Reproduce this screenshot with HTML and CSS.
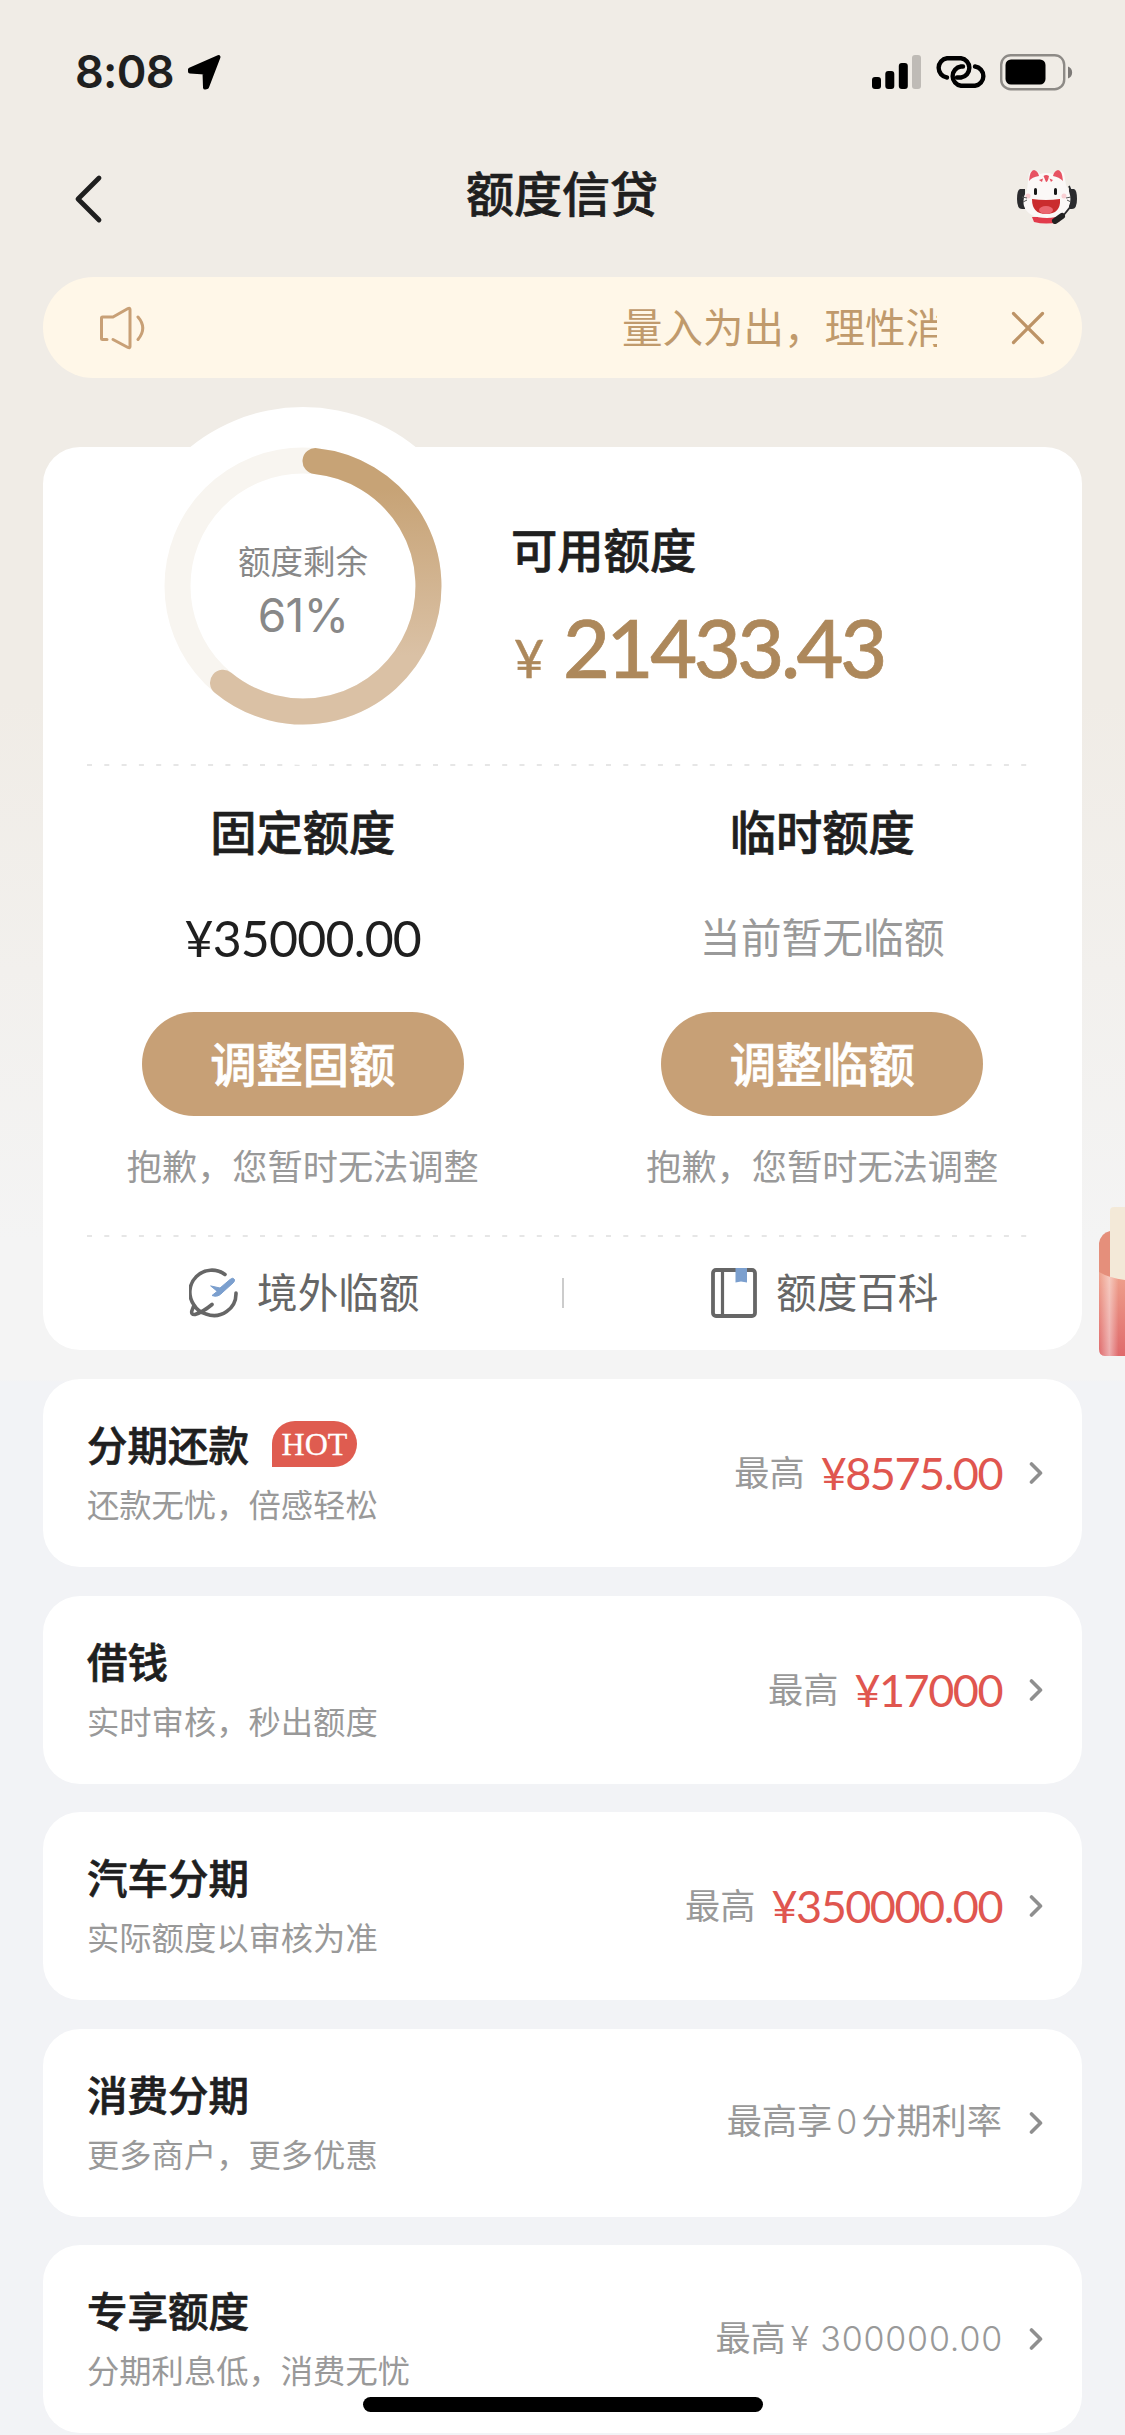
FILE: index.html
```html
<!DOCTYPE html>
<html lang="zh-CN">
<head>
<meta charset="utf-8">
<title>额度信贷</title>
<link rel="stylesheet" href="styles.css">
</head>
<body>
<div class="screen">
  <div class="status">
    <span class="clock">8:08</span>
    <svg class="locate" width="36" height="36" viewBox="0 0 36 36"><path d="M3 15.500L31.500 3L20 33L18 33.500L17.500 18.500L3 17.500Z" stroke="#000" stroke-width="4" stroke-linejoin="round"/></svg>
    <div class="indicators">
      <svg width="50" height="36" viewBox="0 0 50 36"><rect x="0" y="23" width="9" height="12" rx="3"/><rect x="13.300" y="17" width="9" height="18" rx="3"/><rect x="26.800" y="9" width="9" height="26" rx="3"/><rect x="40" y="1" width="9" height="34" rx="3" fill="#bfbbb6"/></svg>
      <svg width="52" height="32" viewBox="0 0 52 32" fill="none" stroke="#000" stroke-width="4.400" stroke-linecap="round"><path d="M12 21.500A9.750 9.750 0 0 1 12 2.200H26A9.750 9.750 0 0 1 26 21.500H22"/><path d="M40 10.500A9.750 9.750 0 0 1 40 29.800H26A9.750 9.750 0 0 1 26 10.500H28"/></svg>
      <svg width="74" height="37" viewBox="0 0 74 37"><rect x="1.200" y="1.200" width="63" height="34" rx="9.500" fill="none" stroke="#8d8a86" stroke-width="2.400"/><rect x="5.500" y="5.500" width="40" height="25" rx="5.500"/><path d="M68 12.500C73.500 14 73.500 23 68 24.500Z" fill="#7d7a77"/></svg>
    </div>
  </div>

  <header class="nav">
    <svg class="back" width="32" height="52" viewBox="0 0 32 52" fill="none" stroke="#1f1f1f" stroke-width="4.800" stroke-linecap="round" stroke-linejoin="round"><path d="M27 5L6 26L27 47"/></svg>
    <h1>额度信贷</h1>
    <svg class="mascot" width="62" height="56" viewBox="0 0 62 56">
      <path d="M9 21H4Q1 22 1 31Q1 41 6 41H9ZM53 21H58Q61 22 61 31Q61 41 56 41H53Z" fill="#2b2b2e"/>
      <path d="M16 49H46L43 54Q30 57 18 54Z" fill="#e23b4c"/>
      <path d="M11 22L13 5Q18 -1 24 6Q31 4 37 6Q43 -1 48 5L50 17Q57 29 53 38Q48 50 31 50Q12 50 8 38Q6 30 11 22Z" fill="#fbf8f7"/>
      <path d="M13 13Q14 2 18 2Q22 3 23 8Q16 9 13 13ZM47 13Q46 2 42 2Q38 3 37 8Q43 9 47 13ZM27.500 8L30 14Q32 14 33 8Q30 6 27.500 8ZM23 12L27 10.500L26 14ZM37 12L33.500 10.500L35 14Z" fill="#e75262"/>
      <rect x="18" y="20" width="3" height="7" rx="1.500" fill="#171717"/><rect x="38" y="20" width="3" height="7" rx="1.500" fill="#171717"/>
      <path d="M16 31Q30 33 44 31Q45 46 30 46Q16 46 16 31Z" fill="#ca2c2e"/><ellipse cx="30" cy="42" rx="7" ry="4" fill="#ea6670"/>
      <circle cx="12" cy="28" r="2.500" fill="#f9cfd3"/><circle cx="48" cy="28" r="2.500" fill="#f9cfd3"/>
      <path d="M6 29L11 30M7 34L11 32M50 30L55 29M51 32L55 34" stroke="#555" stroke-width="1"/>
      <path d="M53 18Q58 28 55 38L47 48" fill="none" stroke="#2b2b2e" stroke-width="1.800"/><path d="M39 53L46 48" stroke="#222" stroke-width="6" stroke-linecap="round"/>
    </svg>
  </header>

  <div class="notice">
    <svg width="48" height="46" viewBox="0 0 48 46" fill="none" stroke="#c8a076" stroke-width="3" stroke-linecap="round" stroke-linejoin="round"><path d="M8 34.500H3.500Q2.500 34.500 2.500 33.500V13Q2.500 12 3.500 12H14L29 3.500Q31 2.500 31 4.500V41.500Q31 43.500 29 42.500L14 34.500"/><path d="M39 12Q48.500 23 39 34.500"/></svg>
    <div class="ticker">量入为出，理性消费</div>
    <svg width="34" height="34" viewBox="0 0 34 34" stroke="#bd9366" stroke-width="3.200" stroke-linecap="round"><path d="M2.500 2.500L31.500 31.500M31.500 2.500L2.500 31.500"/></svg>
  </div>

  <main class="card quota">
    <section class="summary">
      <div class="gauge">
        <svg width="358" height="358" viewBox="0 0 358 358">
          <defs><linearGradient id="gold" gradientUnits="userSpaceOnUse" x1="0" y1="40" x2="0" y2="318"><stop offset="0.150" stop-color="#c7a376"/><stop offset="0.750" stop-color="#dac1a5"/></linearGradient></defs>
          <circle cx="179" cy="179" r="179" fill="#fff"/>
          <circle cx="179" cy="179" r="125.500" fill="none" stroke="#f8f5f0" stroke-width="26"/>
          <path d="M191.500 54.100A125.500 125.500 0 1 1 99 275.700" fill="none" stroke="url(#gold)" stroke-width="26" stroke-linecap="round"/>
        </svg>
        <div class="gauge-label"><span>额度剩余</span><b>61%</b></div>
      </div>
      <div class="available">
        <h2>可用额度</h2>
        <p><span class="yen">¥</span><span class="num">21433.43</span></p>
      </div>
    </section>
    <svg class="dash" width="944" height="2" viewBox="0 0 944 2"><path d="M0 1H944" stroke="#e6e6e6" stroke-width="2" stroke-dasharray="5 12.300"/></svg>
    <section class="columns">
      <div class="column">
        <h2>固定额度</h2>
        <p class="amount">¥35000.00</p>
        <button>调整固额</button>
        <small>抱歉，您暂时无法调整</small>
      </div>
      <div class="column">
        <h2>临时额度</h2>
        <p class="none">当前暂无临额</p>
        <button>调整临额</button>
        <small>抱歉，您暂时无法调整</small>
      </div>
    </section>
    <svg class="dash" width="944" height="2" viewBox="0 0 944 2"><path d="M0 1H944" stroke="#e6e6e6" stroke-width="2" stroke-dasharray="5 12.300"/></svg>
    <nav class="links">
      <a><svg width="50" height="50" viewBox="0 0 50 50" fill="none" stroke="#666" stroke-width="3.600" stroke-linecap="round" stroke-linejoin="round"><path d="M36 6.500A22 22 0 0 0 5 37L2.800 43Q2 47 6 46.500Q14 44 23 36.500M5 37Q9 44 17 46A22 22 0 0 0 47 25"/><path d="M22 18L31 20L41 11.500Q44 9 45.500 11.500Q46 13 44 15L34 24Q29 30 23 27.500L28 23.500Z" fill="#7b9fce" stroke="#7b9fce" stroke-width="1"/></svg><span>境外临额</span></a>
      <i></i>
      <a><svg width="47" height="50" viewBox="0 0 47 50"><rect x="2" y="2" width="42" height="46" rx="3" fill="none" stroke="#666" stroke-width="3.800"/><path d="M11.500 2V48" stroke="#666" stroke-width="3.200"/><path d="M24.500 0H36V14.500L30 13.500L24.500 14.500Z" fill="#7b9fce"/></svg><span>额度百科</span></a>
    </nav>
  </main>

  <div class="list">
    <article class="card row">
      <div><h3>分期还款<em>HOT</em></h3><p>还款无忧，倍感轻松</p></div>
      <div class="value"><span>最高</span><b>¥8575.00</b><svg class="go" width="14" height="24" viewBox="0 0 14 24"><path d="M2.500 3L11.500 12L2.500 21"/></svg></div>
    </article>
    <article class="card row">
      <div><h3>借钱</h3><p>实时审核，秒出额度</p></div>
      <div class="value"><span>最高</span><b>¥17000</b><svg class="go" width="14" height="24" viewBox="0 0 14 24"><path d="M2.500 3L11.500 12L2.500 21"/></svg></div>
    </article>
    <article class="card row">
      <div><h3>汽车分期</h3><p>实际额度以审核为准</p></div>
      <div class="value"><span>最高</span><b>¥350000.00</b><svg class="go" width="14" height="24" viewBox="0 0 14 24"><path d="M2.500 3L11.500 12L2.500 21"/></svg></div>
    </article>
    <article class="card row">
      <div><h3>消费分期</h3><p>更多商户，更多优惠</p></div>
      <div class="value"><span>最高享<i>0</i>分期利率</span><svg class="go" width="14" height="24" viewBox="0 0 14 24"><path d="M2.500 3L11.500 12L2.500 21"/></svg></div>
    </article>
    <article class="card row">
      <div><h3>专享额度</h3><p>分期利息低，消费无忧</p></div>
      <div class="value"><span>最高<i class="cap">¥ 300000.00</i></span><svg class="go" width="14" height="24" viewBox="0 0 14 24"><path d="M2.500 3L11.500 12L2.500 21"/></svg></div>
    </article>
  </div>

  <svg class="packet" width="26" height="150" viewBox="0 0 26 150">
    <defs><linearGradient id="pocket" x1="0" y1="0" x2="0" y2="1"><stop offset="0" stop-color="#efa28d"/><stop offset="1" stop-color="#df6a6c"/></linearGradient><linearGradient id="shine"><stop offset="0" stop-color="#fff" stop-opacity="0"/><stop offset="0.400" stop-color="#fff" stop-opacity="0.450"/><stop offset="0.750" stop-color="#fff" stop-opacity="0"/></linearGradient></defs>
    <path d="M0 36Q2 26 11 24H26V100H0Z" fill="#e58f7b"/>
    <path d="M11 4Q11 0 15 0H26V80H11Z" fill="#f3e9d8"/>
    <path d="M0 65Q10 71 26 73V149H6Q0 149 0 142Z" fill="url(#pocket)"/>
    <path d="M0 65Q10 71 26 73V149H6Q0 149 0 142Z" fill="url(#shine)"/>
  </svg>
  <div class="home"></div>
</div>
</body>
</html>
```
FILE: styles.css
```css
* { box-sizing: border-box; }
body { margin: 0; font-family: "Noto Sans CJK SC", sans-serif; color: #1f1f1f; }
h1, h2, h3, p { margin: 0; }
h1, h2, h3 { font-weight: 500; -webkit-text-stroke: 0.700px currentColor; }
svg { display: block; flex: none; }
i, em { font-style: normal; }

.screen {
  position: relative;
  width: 1125px;
  height: 2435px;
  overflow: hidden;
  padding: 0 43px;
  background: linear-gradient(#f0ece6 0, #f0ece6 700px, #f4f4f4 1240px, #f4f4f4 1380px, #f2f3f6 1382px);
}

.status { display: flex; align-items: center; height: 144px; padding: 0 8px 0 32px; }
.clock { font: 600 45px/50px Inter, sans-serif; letter-spacing: -0.700px; }
.locate { margin-left: 13px; }
.indicators { display: flex; align-items: center; gap: 14px; margin-left: auto; }
.indicators svg:nth-child(2) { margin: 0 -1px; }

.nav { display: flex; align-items: center; justify-content: space-between; height: 110px; padding: 0 4px 0 29px; }
.nav h1 { font-size: 48px; line-height: 60px; margin: -17px 0 0 4px; }
.mascot { margin-top: -6px; }

.notice {
  display: flex;
  align-items: center;
  height: 101px;
  margin-top: 23px;
  padding: 0 37px 0 56px;
  border-radius: 51px;
  background: #fff7e8;
  color: #c09a6c;
}
.ticker { width: 315px; margin: -4px 74px 0 auto; font-size: 40.500px; line-height: 56px; overflow: hidden; white-space: nowrap; }

.card { background: #fff; border-radius: 37px; }
.quota { height: 903px; margin-top: 69px; }
.summary { display: flex; height: 317px; }
.gauge { position: relative; width: 358px; height: 358px; margin: -40px 0 0 81px; }
.gauge-label {
  position: absolute;
  inset: 0;
  display: flex;
  flex-direction: column;
  align-items: center;
  padding-top: 129px;
  color: #888;
}
.gauge-label span { font-size: 32.500px; line-height: 48px; }
.gauge-label b { font: 400 46px/50px Inter, sans-serif; letter-spacing: -0.600px; margin-top: 6px; }
.available { margin: 71px 0 0 29px; }
.available h2, .column h2 { font-size: 46.300px; line-height: 60px; }
.available p { display: flex; align-items: baseline; color: #ad885b; font-family: Lato, sans-serif; line-height: 90px; margin-top: 24px; }
.yen { font-size: 52px; width: 49px; margin-left: 3px; -webkit-text-stroke: 0.500px currentColor; }
.num { font-size: 81px; font-weight: 500; letter-spacing: -3.400px; -webkit-text-stroke: 0.700px currentColor; }
.dash { margin-left: 44px; }

.columns { display: grid; grid-template-columns: 1fr 1fr; height: 468.500px; }
.column { display: flex; flex-direction: column; align-items: center; padding: 34px 0 0; }
.column p { height: 60px; margin-top: 48px; line-height: 60px; }
.amount { font-family: Lato, sans-serif; font-size: 50px; letter-spacing: -0.800px; }
.column .none { margin-top: 46px; padding-bottom: 2px; height: 62px; font-size: 40.800px; color: #999; }
.column button { width: 322px; height: 104px; margin-top: 44px; padding: 0 0 4px; border: 0; border-radius: 52px; background: #c7a076; color: #fff; font: 500 46.300px/60px "Noto Sans CJK SC", sans-serif; -webkit-text-stroke: 0.700px currentColor; }
.column small { margin-top: 23px; font-size: 35.200px; line-height: 52px; color: #999; }

.links { display: flex; align-items: center; height: 113.500px; color: #666; }
.links a { display: flex; flex: 1; align-items: center; justify-content: center; gap: 18px; padding-left: 4px; font-size: 40.600px; line-height: 60px; }
.links a span { margin-top: -4px; }
.links i { width: 2px; height: 30px; background: #ccc; }

.list { display: grid; grid-auto-rows: 188px; gap: 28.500px; margin-top: 29px; }
.row { display: flex; justify-content: space-between; padding: 37px 39px 0 44px; }
.row h3 { display: flex; align-items: center; height: 56px; font-size: 40.500px; line-height: 56px; }
.row p { margin-top: 9px; font-size: 32.300px; line-height: 44px; color: #999; }
.row em { width: 85px; height: 46px; margin-left: 23px; border-radius: 23px 23px 23px 0; background: #df5c50; color: #fff; font: 400 32px/46px "Liberation Serif", serif; text-align: center; -webkit-text-stroke: 0.300px currentColor; }
.value { display: flex; align-items: center; height: 60px; margin-top: 27px; font-size: 35.200px; line-height: 60px; color: #999; white-space: nowrap; }
.value b { margin-left: 16px; font: 400 45px/60px Lato, sans-serif; letter-spacing: -1.500px; color: #e0564f; }
.value span { margin-top: -4px; }
.value i { margin: 0 4px; font-family: Inter, sans-serif; font-size: 34px; font-weight: 300; }
.value .cap { margin: 0 -1px 0 5px; letter-spacing: 0.800px; }
.go { margin-left: 27px; fill: none; stroke: #8f8f8f; stroke-width: 3.600; stroke-linecap: round; stroke-linejoin: round; }

.packet { position: absolute; right: 0; top: 1207px; }
.home { position: absolute; left: 363px; top: 2397px; width: 400px; height: 15px; border-radius: 8px; background: #000; }
```
